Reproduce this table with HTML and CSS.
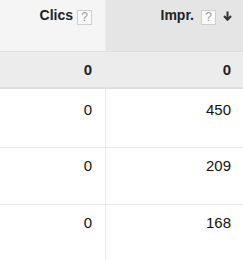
FILE: index.html
```html
<!DOCTYPE html>
<html>
<head>
<meta charset="utf-8">
<link rel="stylesheet" href="styles.css">
</head>
<body>
<div class="grid">
  <div class="cell head">
    <span class="label">Clics</span><span class="help">?</span>
  </div>
  <div class="cell head sorted">
    <span class="label">Impr.</span><span class="help">?</span>
    <svg class="arrow" width="9" height="10" viewBox="0 0 9 10"><path d="M4.5 0.5V8.5M1 5L4.5 8.8L8 5" fill="none" stroke="#333" stroke-width="2"/></svg>
  </div>
  <div class="cell total">0</div>
  <div class="cell total">0</div>
  <div class="cell row r1">0</div>
  <div class="cell row r1">450</div>
  <div class="cell row r2">0</div>
  <div class="cell row r2">209</div>
  <div class="cell row r3">0</div>
  <div class="cell row r3">168</div>
</div>
</body>
</html>
```
FILE: styles.css
```css
html, body {
  margin: 0;
  padding: 0;
  background: #fff;
}
body {
  font-family: "Liberation Sans", Arial, sans-serif;
  color: #222;
  width: 243px;
  height: 260px;
  overflow: hidden;
}
.grid {
  display: grid;
  grid-template-columns: 106px 137px;
  grid-template-rows: 52px 37px 59px 57px 57px;
}
.cell {
  box-sizing: border-box;
  display: flex;
  justify-content: flex-end;
  text-align: right;
}
.cell:nth-child(odd) {
  border-right: 1px solid #ebebeb;
}
.head {
  background: #f5f5f5;
  border-bottom: 1px solid #dedede;
  padding: 7px 13px 0 0;
  align-items: flex-start;
  font-weight: bold;
  font-size: 14px;
  line-height: 16px;
}
.head.sorted {
  background: #e5e5e5;
  padding-right: 11px;
}
.label {
  color: #222;
}
.help {
  display: inline-block;
  box-sizing: border-box;
  width: 15px;
  height: 15px;
  margin: 3px 0 0 4px;
  border: 1px solid #cfcfcf;
  background: #fafafa;
  color: #999;
  font-weight: normal;
  font-size: 12px;
  line-height: 13px;
  text-align: center;
}
.sorted .help {
  margin-left: 7px;
}
.arrow {
  margin: 4px 0 0 7px;
}
.total {
  background: #ececec;
  border-bottom: 2px solid #dedede;
  align-items: center;
  padding-right: 13px;
  font-weight: bold;
  font-size: 15px;
}
.total:nth-child(4) {
  padding-right: 12px;
}
.row {
  border-bottom: 1px solid #ebebeb;
  padding: 9px 13px 0 0;
  align-items: flex-start;
  font-size: 15px;
  line-height: 17px;
  color: #111;
}
.r1 {
  padding-top: 12px;
}
.row:nth-child(even) {
  padding-right: 12px;
}
.r3 {
  border-bottom: none;
}
```
